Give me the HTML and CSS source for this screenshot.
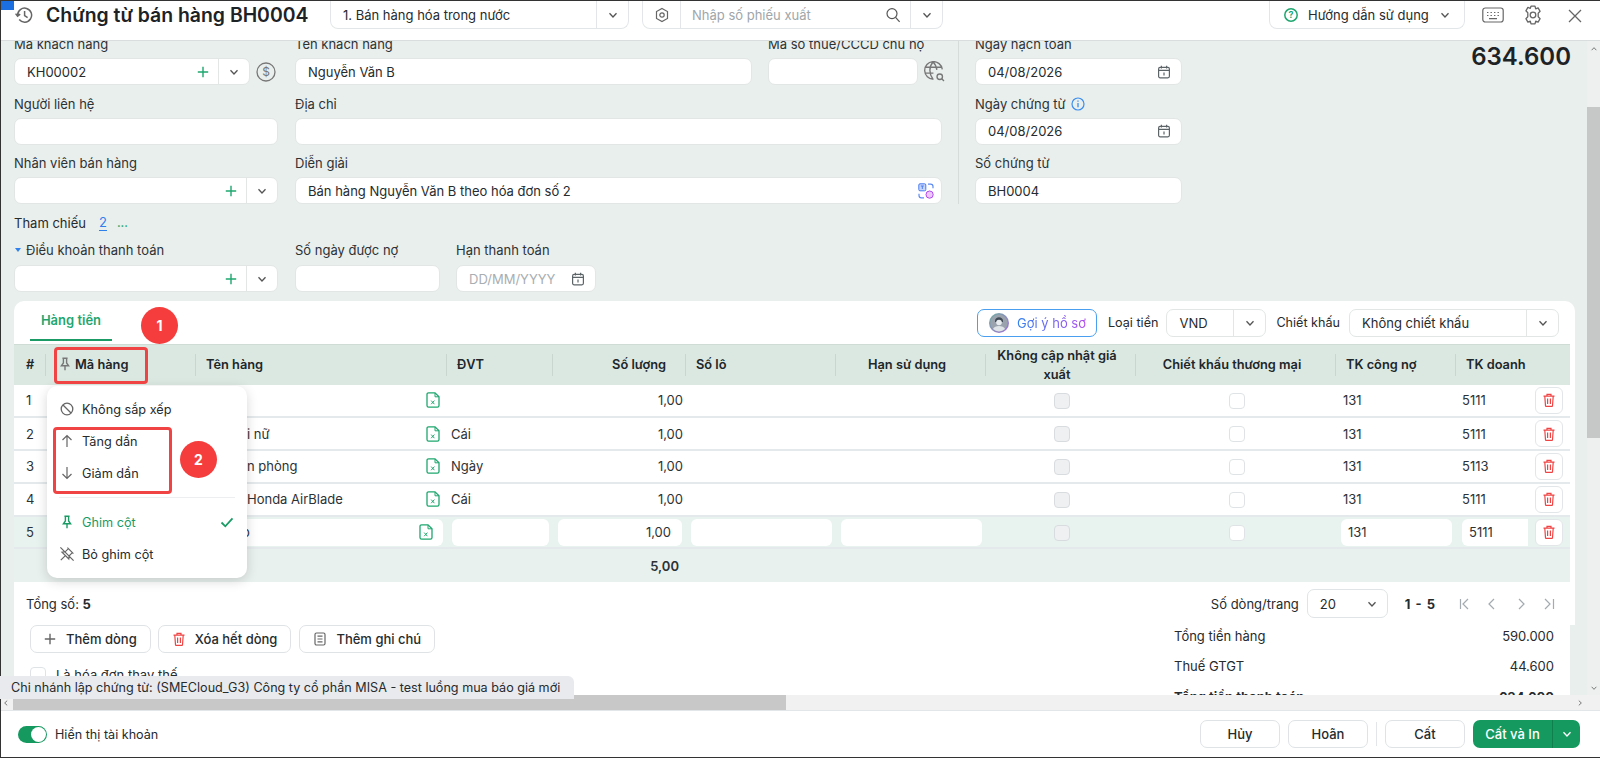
FILE: index.html
```html
<!DOCTYPE html>
<html lang="vi">
<head>
  <meta charset="UTF-8">
  <title>Chứng từ bán hàng BH0004</title>
  <link rel="stylesheet" href="styles.css">
</head>
<body>
  <svg class="sprite" aria-hidden="true">
    <defs>
      <linearGradient id="g-ring" x1="0" y1="0" x2="1" y2="1"><stop offset="0" stop-color="#6fb0a0"/><stop offset="1" stop-color="#a46ed8"/></linearGradient>
    </defs>
    <symbol id="i-chev" viewBox="0 0 12 12"><path d="M2.5 4.2 6 8l3.5-3.8" fill="none" stroke="currentColor" stroke-width="1.3"/></symbol>
    <symbol id="i-plus" viewBox="0 0 12 12"><path d="M6 .8v10.4M.8 6h10.4" fill="none" stroke="currentColor" stroke-width="1.4"/></symbol>
    <symbol id="i-cal" viewBox="0 0 14 14"><g fill="none" stroke="currentColor" stroke-width="1.2"><rect x="1.6" y="2.4" width="10.8" height="10.4" rx="1.5"/><path d="M1.6 5.4h10.8M4.4.8v2.6M9.6.8v2.6M7 7.6v3"/></g></symbol>
    <symbol id="i-trash" viewBox="0 0 14 14"><g fill="none" stroke="currentColor" stroke-width="1.2"><path d="M1.5 3.2h11M5 3V1.4h4V3M2.8 3.2l.7 9.6c0 .3.3.6.6.6h5.8c.3 0 .6-.3.6-.6l.7-9.6M5.6 5.6v5.4M8.4 5.6v5.4"/></g></symbol>
    <symbol id="i-xls" viewBox="0 0 14 16"><g fill="none" stroke="#1fa66f" stroke-width="1.3"><path d="M9 .8H2.600C1.600.8 1 1.400 1 2.400v11.200c0 1 .6 1.600 1.600 1.600h8.800c1 0 1.600-.6 1.600-1.600V4.800z"/><path d="M9 1v3.800h4M5.200 8.600l3.200 3.600M8.400 8.600l-3.200 3.600" stroke-width="1"/></g></symbol>
    <symbol id="i-pin" viewBox="0 0 14 14"><path d="M4.400 1.200h5.200M5.400 1.200v4.800L3.400 8.800h7.200L8.600 6V1.200M7 8.800v4.400" fill="none" stroke="currentColor" stroke-width="1.400"/></symbol>
  </svg>

  <div class="app">
    <header class="topbar">
      <svg class="history" viewBox="0 0 18 18"><g fill="none" stroke="#666" stroke-width="1.500"><path d="M4.200 13.600A7 7 0 1 0 2.600 9.200M.6 7.600l2 2.600 2.600-2M9.600 5v4.600l3 2"/></g></svg>
      <h1 class="title">Chứng từ bán hàng BH0004</h1>
      <div class="top-box box-type">
        <span class="top-text">1. Bán hàng hóa trong nước</span>
        <span class="box-split"><svg class="ic12"><use href="#i-chev"/></svg></span>
      </div>
      <div class="top-box box-search">
        <span class="box-gear">
          <svg class="ic16" viewBox="0 0 16 16"><g fill="none" stroke="#666" stroke-width="1.2"><path d="M8 1.500 13.500 4.600v6.800L8 14.500 2.500 11.400V4.600z"/><circle cx="8" cy="8" r="2.200"/></g></svg>
        </span>
        <span class="top-text placeholder">Nhập số phiếu xuất</span>
        <svg class="ic16" viewBox="0 0 16 16"><g fill="none" stroke="#555" stroke-width="1.2"><circle cx="7" cy="6.600" r="5"/><path d="m10.600 10.400 4 4.400"/></g></svg>
        <span class="box-split"><svg class="ic12"><use href="#i-chev"/></svg></span>
      </div>
      <div class="top-right">
        <div class="top-box box-help">
          <svg class="ic16" viewBox="0 0 16 16"><circle cx="8" cy="8" r="6.200" fill="none" stroke="#1fa66f" stroke-width="1.500"/><text x="8" y="11.200" text-anchor="middle" class="help-q">?</text></svg>
          <span class="top-text">Hướng dẫn sử dụng</span>
          <svg class="ic12"><use href="#i-chev"/></svg>
        </div>
        <svg class="kbd" viewBox="0 0 22 16"><g fill="none" stroke="#666" stroke-width="1.2"><rect x=".8" y="1" width="20.400" height="14" rx="2.500"/><path d="M5 5.500h1.400M8.500 5.500h1.400M12 5.500h1.400M15.500 5.500h1.400M5 8.500h1.400M8.500 8.500h1.400M12 8.500h1.400M15.500 8.500h1.400M7 11.600h8"/></g></svg>
        <svg class="gear" viewBox="0 0 20 20"><g fill="none" stroke="#666" stroke-width="1.300" stroke-linejoin="round"><path d="M8 1.200h4l.7 2.600 2.400-.9 2 3.400-1.900 1.900v3.600l1.900 1.900-2 3.400-2.400-.9-.7 2.600H8l-.7-2.600-2.400.9-2-3.400 1.900-1.900V7.700L2.900 5.800l2-3.400 2.400.9z"/><circle cx="10" cy="10" r="2.800"/></g></svg>
        <svg class="close" viewBox="0 0 14 14"><path d="m1 1 12 12M13 1 1 13" fill="none" stroke="#666" stroke-width="1.300"/></svg>
      </div>
    </header>

    <div class="workspace">
      <div class="content">
        <section class="form-top">
          <div class="form-main">
            <div class="field">
              <label>Mã khách hàng</label>
              <div class="with-icon">
                <div class="combo">
                  <input value="KH00002">
                  <svg class="ic12 green"><use href="#i-plus"/></svg>
                  <span class="combo-split"><svg class="ic12"><use href="#i-chev"/></svg></span>
                </div>
                <svg class="side-icon" viewBox="0 0 20 20"><circle cx="10" cy="10" r="9" fill="none" stroke="#777" stroke-width="1.300"/><text x="10" y="14.400" text-anchor="middle" class="dollar">$</text></svg>
              </div>
            </div>
            <div class="field">
              <label>Tên khách hàng</label>
              <input class="input" value="Nguyễn Văn B">
            </div>
            <div class="field tax-field">
              <label>Mã số thuế/CCCD chủ hộ</label>
              <div class="with-icon">
                <input class="input">
                <svg class="side-icon globe" viewBox="0 0 20 20"><g fill="none" stroke="#777" stroke-width="1.300"><path d="M9 17.400A8.400 8.400 0 1 1 17.400 8M1.200 6h15.600M1.200 11.500h7.800M8.600 1c-4 4.500-4 11 0 16.400M8.600 1c2.400 2.400 3.400 5 3.600 7.500"/><circle cx="15" cy="15" r="2.600"/><path d="m17 17 2 2"/></g></svg>
              </div>
            </div>
            <div class="field">
              <label>Người liên hệ</label>
              <input class="input">
            </div>
            <div class="field span-2">
              <label>Địa chỉ</label>
              <input class="input">
            </div>
            <div class="field">
              <label>Nhân viên bán hàng</label>
              <div class="combo">
                <input>
                <svg class="ic12 green"><use href="#i-plus"/></svg>
                <span class="combo-split"><svg class="ic12"><use href="#i-chev"/></svg></span>
              </div>
            </div>
            <div class="field span-2">
              <label>Diễn giải</label>
              <div class="combo">
                <input value="Bán hàng Nguyễn Văn B theo hóa đơn số 2">
                <svg class="ic16 translate" viewBox="0 0 16 16">
                  <rect x=".8" y=".8" width="7" height="7" rx="1.200" fill="#c9d6fb" stroke="#4a7df0"/>
                  <path d="M2.800 3h3M4.300 3v3" stroke="#4a7df0" fill="none"/>
                  <circle cx="11.600" cy="11.600" r="3.600" fill="#ecc8f7" stroke="#b04af0"/>
                  <path d="M10 1.200h2.600c1.400 0 2.400 1 2.400 2.400v1.600M6 14.800H3.400C2 14.800 1 13.800 1 12.400v-1.600" stroke="#5f8cf2" fill="none" stroke-width="1.200"/>
                </svg>
              </div>
            </div>
          </div>
          <div class="form-side">
            <div class="field">
              <label>Ngày hạch toán</label>
              <div class="combo">
                <input value="04/08/2026">
                <svg class="ic14"><use href="#i-cal"/></svg>
              </div>
            </div>
            <div class="field">
              <label>Ngày chứng từ
                <svg class="info" viewBox="0 0 14 14"><circle cx="7" cy="7" r="6" fill="none" stroke="#3b8df0" stroke-width="1.200"/><path d="M7 6v4.200M7 3.600v1.200" stroke="#3b8df0" stroke-width="1.300"/></svg>
              </label>
              <div class="combo">
                <input value="04/08/2026">
                <svg class="ic14"><use href="#i-cal"/></svg>
              </div>
            </div>
            <div class="field">
              <label>Số chứng từ</label>
              <input class="input" value="BH0004">
            </div>
          </div>
          <div class="grand-total">634.600</div>
        </section>

        <div class="ref-row">
          <span>Tham chiếu</span>
          <a class="ref-link">2</a>
          <span class="ref-more">...</span>
        </div>

        <section class="terms">
          <div class="field term-wide">
            <label><span class="caret"></span>Điều khoản thanh toán</label>
            <div class="combo">
              <input>
              <svg class="ic12 green"><use href="#i-plus"/></svg>
              <span class="combo-split"><svg class="ic12"><use href="#i-chev"/></svg></span>
            </div>
          </div>
          <div class="field term-days">
            <label>Số ngày được nợ</label>
            <input class="input">
          </div>
          <div class="field term-date">
            <label>Hạn thanh toán</label>
            <div class="combo">
              <input placeholder="DD/MM/YYYY">
              <svg class="ic14"><use href="#i-cal"/></svg>
            </div>
          </div>
        </section>

        <section class="card">
          <div class="tabbar">
            <div class="tab">Hàng tiền</div>
            <div class="tab-tools">
              <div class="suggest">
                <svg class="avatar" viewBox="0 0 20 20"><circle cx="10" cy="10" r="10" fill="url(#g-ring)"/><circle cx="10" cy="10" r="8.600" fill="#9aa3ad"/><path d="M6 8c0-5 8-5 8 0v1H6z" fill="#3f4a56"/><circle cx="10" cy="9.500" r="2.800" fill="#e8ecef"/><path d="M4 16c1.500-4 10.500-4 12 0a8.600 8.600 0 0 1-12 0" fill="#dfe4e8"/></svg>
                <span class="suggest-text">Gợi ý hồ sơ</span>
              </div>
              <span class="tool-label">Loại tiền</span>
              <div class="combo currency">
                <input value="VND">
                <span class="combo-split wide"><svg class="ic12"><use href="#i-chev"/></svg></span>
              </div>
              <span class="tool-label disc-label">Chiết khấu</span>
              <div class="combo discount">
                <input value="Không chiết khấu">
                <span class="combo-split wide"><svg class="ic12"><use href="#i-chev"/></svg></span>
              </div>
            </div>
          </div>

          <table class="grid">
            <colgroup>
              <col class="c-no"><col class="c-code"><col class="c-name"><col class="c-unit"><col class="c-qty"><col class="c-lot"><col class="c-exp"><col class="c-noupd"><col class="c-disc"><col class="c-debt"><col class="c-rev">
            </colgroup>
            <thead>
              <tr>
                <th>#</th>
                <th class="th-code"><svg class="ic14 pin-grey"><use href="#i-pin"/></svg>Mã hàng</th>
                <th>Tên hàng</th>
                <th>ĐVT</th>
                <th class="num">Số lượng</th>
                <th>Số lô</th>
                <th class="center">Hạn sử dụng</th>
                <th class="center">Không cập nhật giá xuất</th>
                <th class="center">Chiết khấu thương mại</th>
                <th>TK công nợ</th>
                <th>TK doanh</th>
              </tr>
            </thead>
            <tbody>
              <tr>
                <td>1</td><td></td>
                <td><div class="name-cell"><span></span><svg class="xls"><use href="#i-xls"/></svg></div></td>
                <td class="unit"></td><td class="num">1,00</td><td></td><td></td>
                <td class="center"><input type="checkbox" class="check off"></td>
                <td class="center"><input type="checkbox" class="check"></td>
                <td class="debt">131</td>
                <td><div class="rev-cell">5111<span class="del"><svg class="ic14"><use href="#i-trash"/></svg></span></div></td>
              </tr>
              <tr>
                <td>2</td><td></td>
                <td><div class="name-cell"><span>i nữ</span><svg class="xls"><use href="#i-xls"/></svg></div></td>
                <td class="unit">Cái</td><td class="num">1,00</td><td></td><td></td>
                <td class="center"><input type="checkbox" class="check off"></td>
                <td class="center"><input type="checkbox" class="check"></td>
                <td class="debt">131</td>
                <td><div class="rev-cell">5111<span class="del"><svg class="ic14"><use href="#i-trash"/></svg></span></div></td>
              </tr>
              <tr>
                <td>3</td><td></td>
                <td><div class="name-cell"><span>n phòng</span><svg class="xls"><use href="#i-xls"/></svg></div></td>
                <td class="unit">Ngày</td><td class="num">1,00</td><td></td><td></td>
                <td class="center"><input type="checkbox" class="check off"></td>
                <td class="center"><input type="checkbox" class="check"></td>
                <td class="debt">131</td>
                <td><div class="rev-cell">5113<span class="del"><svg class="ic14"><use href="#i-trash"/></svg></span></div></td>
              </tr>
              <tr>
                <td>4</td><td></td>
                <td><div class="name-cell"><span>Honda AirBlade</span><svg class="xls"><use href="#i-xls"/></svg></div></td>
                <td class="unit">Cái</td><td class="num">1,00</td><td></td><td></td>
                <td class="center"><input type="checkbox" class="check off"></td>
                <td class="center"><input type="checkbox" class="check"></td>
                <td class="debt">131</td>
                <td><div class="rev-cell">5111<span class="del"><svg class="ic14"><use href="#i-trash"/></svg></span></div></td>
              </tr>
              <tr class="editing">
                <td>5</td><td></td>
                <td><div class="cell-box name-box"><span>o</span><svg class="xls"><use href="#i-xls"/></svg></div></td>
                <td><div class="cell-box"></div></td>
                <td><div class="cell-box num">1,00</div></td>
                <td><div class="cell-box"></div></td>
                <td><div class="cell-box"></div></td>
                <td class="center"><input type="checkbox" class="check off"></td>
                <td class="center"><input type="checkbox" class="check"></td>
                <td><div class="cell-box">131</div></td>
                <td><div class="rev-cell"><div class="cell-box rev-box">5111</div><span class="del"><svg class="ic14"><use href="#i-trash"/></svg></span></div></td>
              </tr>
            </tbody>
            <tfoot>
              <tr>
                <td colspan="4"></td>
                <td class="num total-qty">5,00</td>
                <td colspan="6"></td>
              </tr>
            </tfoot>
          </table>

          <div class="pager-row">
            <span>Tổng số: <b>5</b></span>
            <div class="pager">
              <span>Số dòng/trang</span>
              <div class="page-size">20<svg class="ic12"><use href="#i-chev"/></svg></div>
              <b class="page-range">1 - 5</b>
              <svg class="page-arrows" viewBox="0 0 96 14"><path d="M1.500 2v10M9 2 4 7l5 5M35 2l-5 5 5 5M60 2l5 5-5 5M86 2l5 5-5 5M94.500 2v10" fill="none" stroke="#a3aab0" stroke-width="1.200"/></svg>
            </div>
          </div>
        </section>

        <section class="bottom">
          <div class="bottom-left">
            <div class="actions">
              <button class="btn"><svg class="ic12 grey"><use href="#i-plus"/></svg>Thêm dòng</button>
              <button class="btn"><svg class="ic14 red"><use href="#i-trash"/></svg>Xóa hết dòng</button>
              <button class="btn"><svg class="ic14 grey" viewBox="0 0 14 14"><g fill="none" stroke="currentColor" stroke-width="1.200"><rect x="2" y="1" width="10" height="12" rx="1.500"/><path d="M4.500 4.200h5M4.500 7h5M4.500 9.800h5"/></g></svg>Thêm ghi chú</button>
            </div>
            <label class="replace"><input type="checkbox" class="check">Là hóa đơn thay thế</label>
          </div>
          <div class="totals">
            <div class="total-line"><span>Tổng tiền hàng</span><span>590.000</span></div>
            <div class="total-line"><span>Thuế GTGT</span><span>44.600</span></div>
            <div class="total-line strong"><span>Tổng tiền thanh toán</span><span>634.600</span></div>
          </div>
        </section>
      </div>

      <div class="vscroll">
        <svg class="ic8"><use href="#i-chev"/></svg>
        <div class="vtrack"><div class="vthumb"></div></div>
        <svg class="ic8"><use href="#i-chev"/></svg>
      </div>
    </div>

    <div class="hscroll">
      <svg class="ic8 left"><use href="#i-chev"/></svg>
      <div class="hthumb"></div>
      <svg class="ic8 right"><use href="#i-chev"/></svg>
    </div>

    <footer class="footer">
      <div class="toggle-wrap">
        <span class="toggle"></span>
        <span>Hiển thị tài khoản</span>
      </div>
      <div class="footer-actions">
        <button class="fbtn">Hủy</button>
        <button class="fbtn">Hoãn</button>
        <span class="fsep"></span>
        <button class="fbtn">Cất</button>
        <div class="fprimary">
          <span class="fprimary-main">Cất và In</span>
          <span class="fprimary-split"><svg class="ic12"><use href="#i-chev"/></svg></span>
        </div>
      </div>
    </footer>

    <!-- column menu and tutorial marks lie over the page -->
    <div class="col-menu">
      <div class="menu-item">
        <svg class="ic14 grey" viewBox="0 0 14 14"><g fill="none" stroke="currentColor" stroke-width="1.300"><circle cx="7" cy="7" r="5.800"/><path d="m3 3 8 8"/></g></svg>
        Không sắp xếp
      </div>
      <div class="menu-item">
        <svg class="ic14 grey" viewBox="0 0 14 14"><path d="M7 13V1.500M2.500 6 7 1.500 11.500 6" fill="none" stroke="currentColor" stroke-width="1.200"/></svg>
        Tăng dần
      </div>
      <div class="menu-item">
        <svg class="ic14 grey" viewBox="0 0 14 14"><path d="M7 1v11.500M2.500 8 7 12.500 11.500 8" fill="none" stroke="currentColor" stroke-width="1.200"/></svg>
        Giảm dần
      </div>
      <div class="menu-line"></div>
      <div class="menu-item active">
        <svg class="ic14"><use href="#i-pin"/></svg>
        Ghim cột
        <svg class="ic14 tick" viewBox="0 0 14 14"><path d="m1.500 7.500 3.800 3.800 7.200-8" fill="none" stroke="currentColor" stroke-width="1.800"/></svg>
      </div>
      <div class="menu-item">
        <svg class="ic16 unpin" viewBox="0 0 16 16"><g fill="none" stroke="#666" stroke-width="1.200"><path d="M8.400 1.600 14.400 7.600M9.400 2.600 6.200 5.800 3 6.200 9.800 13l.4-3.200 3.200-3.200M6.400 9.600 1.800 14.200M1.400 1.400l13.200 13.200"/></g></svg>
        Bỏ ghim cột
      </div>
    </div>
    <div class="mark mark-code"></div>
    <div class="mark mark-sort"></div>
    <div class="step step-1">1</div>
    <div class="step step-2">2</div>

    <div class="branch-tag">Chi nhánh lập chứng từ: (SMECloud_G3) Công ty cổ phần MISA - test luồng mua báo giá mới</div>
    <div class="corner-mark"></div>
  </div>
</body>
</html>
```

FILE: styles.css
```css
* {
  box-sizing: border-box;
}
html, body {
  margin: 0;
  height: 100%;
  overflow: hidden;
}
body {
  font-family: Inter, "Noto Sans", sans-serif;
  font-size: 13px;
  color: #262b2e;
  background: #fff;
}
svg {
  flex: none;
}
.sprite {
  position: absolute;
  width: 0;
  height: 0;
}
.ic8 { width: 8px; height: 8px; color: #666; }
.ic12 { width: 12px; height: 12px; color: #555; }
.ic14 { width: 14px; height: 14px; color: #5d6468; }
.ic16 { width: 16px; height: 16px; }
.green { color: #1fa66f; }
.grey { color: #666; }
.red { color: #ef4444; }

.app {
  position: relative;
  display: flex;
  flex-direction: column;
  height: 100vh;
  border-top: 1px solid #333;
  border-left: 1px solid #333;
  border-bottom: 1px solid #333;
}
.corner-mark {
  position: absolute;
  left: 0;
  top: 0;
  width: 13px;
  height: 9px;
  background: #1c6fe0;
}

/* top bar */
.topbar {
  display: flex;
  align-items: flex-start;
  flex: none;
  height: 40px;
  padding-left: 14px;
  background: #fff;
  border-bottom: 1px solid #d9dddd;
}
.history {
  width: 18px;
  height: 18px;
  margin-top: 5px;
}
.title {
  width: 284px;
  margin: 0 0 0 13px;
  font-size: 19.4px;
  font-weight: 600;
  line-height: 28px;
  color: #1d2225;
  white-space: nowrap;
}
.top-box {
  display: flex;
  align-items: center;
  height: 28px;
  background: #fff;
  border: 1px solid #e3e6e8;
  border-top: none;
  border-radius: 0 0 8px 8px;
}
.top-text {
  white-space: nowrap;
}
.box-type {
  width: 299px;
  padding-left: 12px;
}
.box-type .top-text {
  flex: 1;
}
.box-split {
  display: flex;
  align-items: center;
  justify-content: center;
  width: 32px;
  height: 100%;
  border-left: 1px solid #e3e6e8;
}
.box-search {
  width: 301px;
  margin-left: 13px;
}
.box-gear {
  display: flex;
  align-items: center;
  justify-content: center;
  width: 38px;
  height: 100%;
  border-right: 1px solid #e3e6e8;
}
.box-search .top-text {
  flex: 1;
  padding-left: 11px;
}
.box-search .ic16 {
  margin-right: 9px;
}
.box-gear .ic16 {
  margin-right: 0;
}
.placeholder {
  color: #a0a6aa;
}
.help-q {
  font-size: 9px;
  font-weight: 700;
  fill: #1fa66f;
}
.top-right {
  display: flex;
  align-items: flex-start;
  margin-left: auto;
}
.box-help {
  width: 196px;
  padding: 0 13px;
  gap: 9px;
}
.box-help .top-text {
  flex: 1;
}
.kbd {
  width: 22px;
  height: 16px;
  margin: 6px 0 0 17px;
}
.gear {
  width: 20px;
  height: 20px;
  margin: 4px 0 0 19px;
}
.close {
  width: 14px;
  height: 14px;
  margin: 8px 18px 0 25px;
}

/* main area */
.workspace {
  display: flex;
  flex: 1;
  min-height: 0;
  background: #e9efed;
  overflow: hidden;
}
.content {
  flex: 1;
  min-width: 0;
  padding-left: 13px;
  overflow: hidden;
}
.form-top {
  display: flex;
  margin-top: -7px;
}
.form-main {
  display: grid;
  grid-template-columns: 264px 457px 173px;
  column-gap: 17px;
  row-gap: 8.5px;
}
.span-2 {
  grid-column: span 2;
}
.tax-field {
  margin-left: -1px;
}
.form-side {
  display: flex;
  flex-direction: column;
  gap: 8.5px;
  width: 223px;
  height: 170px;
  margin-left: 16px;
  padding-left: 16px;
  border-left: 1px solid #d5dcda;
}
.form-side .field {
  width: 207px;
}
.field label {
  display: flex;
  align-items: center;
  gap: 5px;
  height: 20px;
  margin-bottom: 4px;
  color: #2d3235;
  white-space: nowrap;
}
.input, .combo {
  display: block;
  width: 100%;
  height: 27px;
  padding: 0 12px;
  background: #fff;
  border: 1px solid #e2e7e6;
  border-radius: 7px;
  font: inherit;
  color: inherit;
  outline: none;
}
.combo {
  display: flex;
  align-items: center;
  padding-right: 0;
}
.combo input {
  flex: 1;
  min-width: 0;
  height: 100%;
  padding: 0;
  border: none;
  background: none;
  font: inherit;
  color: inherit;
  outline: none;
}
.combo input::placeholder {
  color: #a8aeb2;
}
.combo > .ic14 {
  margin-right: 10px;
}
.combo > .translate {
  margin-right: 7px;
}
.combo-split {
  display: flex;
  align-items: center;
  justify-content: center;
  width: 31px;
  height: 100%;
  margin-left: 9px;
  border-left: 1px solid #e2e7e6;
}
.combo-split.wide {
  width: 32px;
}
.with-icon {
  display: flex;
  align-items: center;
  gap: 6px;
}
.with-icon .input, .with-icon .combo {
  flex: 1;
  min-width: 0;
  width: auto;
}
.side-icon {
  width: 20px;
  height: 20px;
  margin-right: 2px;
}
.globe {
  width: 21px;
  height: 21px;
  margin-right: -3px;
}
.dollar {
  font-size: 12px;
  fill: #777;
}
.info {
  width: 14px;
  height: 14px;
}
.grand-total {
  margin: 9px 16px 0 auto;
  font-size: 24px;
  font-weight: 600;
  line-height: 28px;
  color: #1d2225;
}
.ref-row {
  display: flex;
  align-items: center;
  gap: 13px;
  height: 16px;
  margin-top: 11px;
}
.ref-link {
  color: #2f80ed;
  border-bottom: 1px solid #2f80ed;
  line-height: 15px;
}
.ref-more {
  margin-left: -3px;
  color: #1fa66f;
  font-size: 11px;
  font-weight: 700;
}
.terms {
  display: flex;
  gap: 17px;
  margin-top: 9px;
}
.terms .field label {
  margin-bottom: 5px;
}
.term-wide { width: 264px; }
.term-days { width: 145px; }
.term-date { width: 140px; margin-left: -1px; }
.caret {
  width: 0;
  height: 0;
  margin-right: 2px;
  border: 3px solid transparent;
  border-top: 4px solid #2f80ed;
  border-bottom: none;
}
.term-wide label {
  gap: 3px;
}
.term-wide label .caret {
  margin-left: 1px;
}

/* grid card */
.card {
  width: 1561px;
  margin-top: 9px;
  background: #fff;
  border-radius: 10px 10px 0 0;
}
.tabbar {
  display: flex;
  justify-content: space-between;
  height: 43px;
  padding: 0 16px;
}
.tab {
  width: 82px;
  height: 40px;
  padding-top: 11px;
  text-align: center;
  color: #1fa66f;
  font-weight: 600;
  border-bottom: 2px solid #1a9b66;
}
.tab-tools {
  display: flex;
  align-items: center;
  gap: 13px;
  height: 43px;
}
.tool-label {
  font-size: 12.6px;
}
.suggest {
  display: flex;
  align-items: center;
  gap: 8px;
  width: 120px;
  height: 28px;
  margin-right: -2px;
  padding-left: 11px;
  border: 1px solid #4a9ff0;
  border-radius: 7px;
}
.avatar {
  width: 20px;
  height: 20px;
}
.suggest-text {
  background: linear-gradient(90deg, #2f80ed, #b04af0);
  -webkit-background-clip: text;
  background-clip: text;
  color: transparent;
}
.disc-label { margin-left: -3px; }
.currency { width: 100px; height: 28px; margin-left: -5px; }
.discount { width: 210px; height: 28px; margin-left: -4px; }
.grid {
  width: 1556px;
  table-layout: fixed;
  border-collapse: collapse;
}
.c-no { width: 32px; }
.c-code { width: 150px; }
.c-name { width: 251px; }
.c-unit { width: 106px; }
.c-qty { width: 133px; }
.c-lot { width: 150px; }
.c-exp { width: 150px; }
.c-noupd { width: 150px; }
.c-disc { width: 200px; }
.c-debt { width: 120px; }
.c-rev { width: 114px; }
.grid th {
  position: relative;
  height: 40px;
  padding: 0 10px;
  background: #dbe8e2;
  border-top: 1px solid #cfdcd6;
  font-size: 12.8px;
  font-weight: 600;
  text-align: left;
  line-height: 19px;
  color: #20262a;
}
.grid th::after {
  content: "";
  position: absolute;
  right: 0;
  top: 9px;
  bottom: 9px;
  width: 1px;
  background: #c9d6d0;
}
.grid th:first-child {
  padding: 0 12px;
}
.grid th:last-child::after {
  display: none;
}
.grid th.center {
  padding: 0 14px 0 6px;
}
.grid th.num {
  padding-right: 20px;
}
.grid .th-code {
  padding-left: 12px;
  white-space: nowrap;
}
.pin-grey {
  margin: 0 3px 0 0;
  vertical-align: -2px;
  color: #777;
}
.grid td {
  height: 32.8px;
  padding: 0 10px;
  border-bottom: 2px solid #e4e9eb;
  color: #2d3235;
}
.grid td:first-child {
  padding: 0 12px;
}
.grid .num {
  text-align: right;
}
.grid td.num {
  padding-right: 3px;
}
.grid .center {
  text-align: center;
}
.grid td.center, .grid .editing td.center {
  padding: 0 8px 0 10px;
}
.grid td.unit {
  padding-left: 4px;
}
.grid td.debt {
  padding-left: 7px;
}
.grid td:last-child {
  padding-left: 6px;
  padding-right: 7px;
}
.name-cell {
  display: flex;
  align-items: center;
  justify-content: space-between;
  padding-left: 41px;
  margin-right: -3px;
}
.xls {
  width: 14px;
  height: 16px;
}
.rev-cell {
  display: flex;
  align-items: center;
  justify-content: space-between;
}
.del {
  display: flex;
  align-items: center;
  justify-content: center;
  width: 28px;
  height: 27px;
  background: #fff;
  border: 1px solid #e3e6e8;
  border-radius: 6px;
}
.del .ic14 {
  color: #ef4444;
}
.check {
  width: 16px;
  height: 16px;
  margin: 0;
  vertical-align: middle;
  appearance: none;
  background: #fff;
  border: 1px solid #dfe3e5;
  border-radius: 4px;
}
.check.off {
  background: #eef0f2;
  border-color: #d9dcdf;
}
.grid .editing td {
  background: #e8f3ef;
  padding-left: 5px;
  padding-right: 4px;
}
.grid .editing td:first-child {
  padding: 0 12px;
}
.grid .editing td:last-child {
  padding-left: 6px;
  padding-right: 7px;
}
.cell-box {
  display: flex;
  align-items: center;
  height: 27px;
  padding: 0 7px;
  background: #fff;
  border-radius: 6px;
}
.cell-box.num {
  justify-content: flex-end;
  padding-right: 11px;
}
.name-box {
  justify-content: space-between;
  padding: 0 10px 0 41px;
}
.rev-box {
  width: 66px;
  border-radius: 6px 0 0 6px;
}
.grid tfoot td {
  height: 34px;
  background: #e9f1ee;
  border-bottom: none;
}
.grid td.total-qty {
  font-weight: 600;
  padding-right: 7px;
}
.pager-row {
  display: flex;
  align-items: center;
  justify-content: space-between;
  height: 43px;
  padding: 0 20px 0 12px;
}
.pager {
  display: flex;
  align-items: center;
}
.page-size {
  display: flex;
  align-items: center;
  justify-content: space-between;
  width: 81px;
  height: 29px;
  margin-left: 8px;
  padding: 0 9px 0 12px;
  border: 1px solid #e0e4e6;
  border-radius: 7px;
}
.page-range {
  margin: 0 24px 0 17px;
  word-spacing: 2px;
}
.page-arrows {
  width: 96px;
  height: 14px;
}
.bottom {
  display: flex;
  justify-content: space-between;
  width: 1556px;
  height: 72px;
  padding: 0 16px;
  background: #fff;
}
.actions {
  display: flex;
  gap: 8px;
}
.btn {
  display: flex;
  align-items: center;
  gap: 9px;
  height: 28px;
  padding: 0 13px;
  background: #fff;
  border: 1px solid #dfe3e5;
  border-radius: 7px;
  font: inherit;
  font-weight: 500;
  color: #262b2e;
}
.btn:first-child {
  gap: 10px;
  margin-right: -1px;
}
.replace {
  display: flex;
  align-items: center;
  gap: 10px;
  margin-top: 14px;
}
.totals {
  width: 380px;
}
.total-line {
  display: flex;
  justify-content: space-between;
  height: 30px;
  line-height: 22px;
}
.total-line:nth-child(2) {
  height: 31px;
}
.total-line.strong {
  font-weight: 700;
}

/* scrollbars */
.vscroll {
  display: flex;
  flex-direction: column;
  align-items: center;
  flex: none;
  width: 13px;
  padding: 4px 0 3px;
  background: #eef0f0;
}
.vscroll > .ic8:first-child {
  transform: rotate(180deg);
}
.vtrack {
  flex: 1;
  width: 100%;
  padding-top: 54px;
}
.vthumb {
  height: 331px;
  background: #c6c8c8;
}
.hscroll {
  position: relative;
  display: flex;
  align-items: center;
  flex: none;
  height: 15px;
  background: #f1f1f1;
}
.hscroll .left {
  transform: rotate(90deg);
  margin-left: 1px;
}
.hscroll .right {
  position: absolute;
  right: 16px;
  transform: rotate(-90deg);
}
.hthumb {
  width: 773px;
  height: 100%;
  margin-left: 3px;
  background: #c8c8c8;
}

/* footer */
.footer {
  display: flex;
  align-items: center;
  justify-content: space-between;
  flex: none;
  height: 47px;
  padding: 0 20px 0 17px;
  background: #fff;
  border-top: 1px solid #e3e6e8;
}
.toggle-wrap {
  display: flex;
  align-items: center;
  gap: 8px;
  font-size: 12.6px;
}
.toggle {
  position: relative;
  width: 29px;
  height: 17px;
  background: #15995f;
  border-radius: 9px;
}
.toggle::after {
  content: "";
  position: absolute;
  right: 1px;
  top: 1px;
  width: 15px;
  height: 15px;
  background: #fff;
  border-radius: 50%;
}
.footer-actions {
  display: flex;
  align-items: center;
  gap: 8px;
}
.fbtn {
  width: 80px;
  height: 28px;
  background: #fff;
  border: 1px solid #dfe3e5;
  border-radius: 7px;
  font: inherit;
  font-weight: 500;
  color: #262b2e;
}
.fsep {
  width: 1px;
  height: 24px;
  background: #e3e6e8;
}
.fprimary {
  display: flex;
  align-items: center;
  width: 107px;
  height: 28px;
  background: #15995f;
  border-radius: 7px;
  color: #fff;
  font-weight: 500;
}
.fprimary-main {
  flex: 1;
  text-align: center;
}
.fprimary-split {
  display: flex;
  align-items: center;
  justify-content: center;
  width: 28px;
  height: 100%;
  border-left: 1px solid #0f7f4e;
}
.fprimary-split .ic12 {
  color: #fff;
}

/* overlays */
.col-menu {
  position: absolute;
  left: 46px;
  top: 385px;
  width: 200px;
  height: 192px;
  padding-top: 7px;
  background: #fff;
  border-radius: 10px;
  box-shadow: 0 3px 12px rgba(0, 0, 0, 0.16);
  font-size: 12.7px;
}
.menu-item {
  position: relative;
  display: flex;
  align-items: center;
  gap: 8px;
  height: 32px;
  padding-left: 13px;
}
.menu-line {
  height: 1px;
  margin: 8px 12px 8px 12px;
  background: #eceeef;
}
.menu-item.active {
  color: #1a9b66;
}
.menu-item.active .ic14 {
  color: #1a9b66;
}
.unpin {
  margin: 0 -1px 0 -1px;
}
.tick {
  position: absolute;
  right: 13px;
}
.mark {
  position: absolute;
  border: 3px solid #f04444;
  border-radius: 4px;
}
.mark-code {
  left: 53px;
  top: 346px;
  width: 94px;
  height: 37px;
}
.mark-sort {
  left: 52px;
  top: 426px;
  width: 119px;
  height: 67px;
}
.step {
  position: absolute;
  width: 37px;
  height: 37px;
  background: #f53d3d;
  border-radius: 50%;
  color: #fff;
  font-size: 14px;
  font-weight: 700;
  line-height: 37px;
  text-align: center;
}
.step-1 {
  left: 140px;
  top: 306px;
}
.step-2 {
  left: 179px;
  top: 440px;
}
.branch-tag {
  position: absolute;
  left: -1px;
  top: 675px;
  width: 574px;
  height: 23px;
  padding-left: 11px;
  background: #e8eaee;
  border-radius: 0 6px 0 0;
  font-size: 12.6px;
  line-height: 23px;
  white-space: nowrap;
}
```
